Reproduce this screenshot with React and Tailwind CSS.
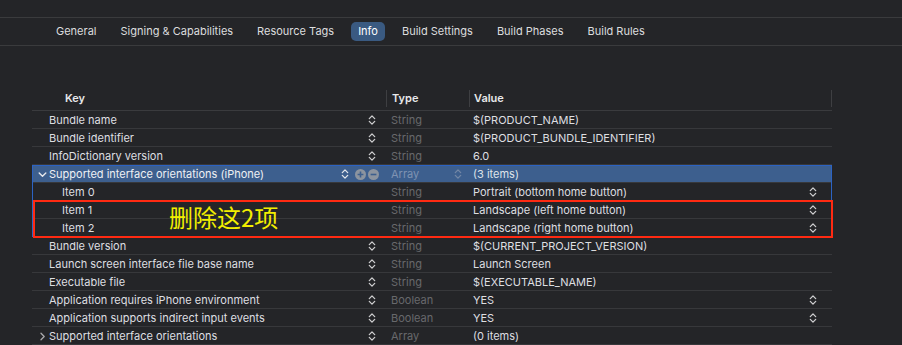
import React from "react";

const Stepper = ({ color = "#cfcfd1" }) => (
  <svg width="8" height="12" viewBox="0 0 8 12" className="shrink-0">
    <path d="M1.3 4.6 L4 1.9 L6.7 4.6" fill="none" stroke={color} strokeWidth="1.3" strokeLinecap="round" strokeLinejoin="round" />
    <path d="M1.3 7.4 L4 10.1 L6.7 7.4" fill="none" stroke={color} strokeWidth="1.3" strokeLinecap="round" strokeLinejoin="round" />
  </svg>
);

const Plus = () => (
  <svg width="11" height="11" viewBox="0 0 11 11" className="shrink-0">
    <circle cx="5.5" cy="5.5" r="5.5" fill="#8c949f" />
    <path d="M5.5 2.6 V8.4 M2.6 5.5 H8.4" stroke="#3d5f8e" strokeWidth="1.6" />
  </svg>
);

const Minus = () => (
  <svg width="11" height="11" viewBox="0 0 11 11" className="shrink-0">
    <circle cx="5.5" cy="5.5" r="5.5" fill="#8c949f" />
    <path d="M2.6 5.5 H8.4" stroke="#3d5f8e" strokeWidth="1.6" />
  </svg>
);

const ChevronDown = () => (
  <svg width="9" height="9" viewBox="0 0 9 9" className="shrink-0">
    <path d="M1.2 3 L4.5 6.2 L7.8 3" fill="none" stroke="#e6e8ec" strokeWidth="1.4" strokeLinecap="round" strokeLinejoin="round" />
  </svg>
);

const ChevronRight = () => (
  <svg width="9" height="9" viewBox="0 0 9 9" className="shrink-0">
    <path d="M3 1.2 L6.2 4.5 L3 7.8" fill="none" stroke="#a9a9ac" strokeWidth="1.3" strokeLinecap="round" strokeLinejoin="round" />
  </svg>
);

const tabs = ["General", "Signing & Capabilities", "Resource Tags", "Info", "Build Settings", "Build Phases", "Build Rules"];

function Row({ keyText, type, value, keyStepper = true, valueStepper = false, indent = false, disclosure = null }) {
  return (
    <div className="grid grid-cols-[354px_83px_363px] h-[18px] border-b border-[#37383b]">
      <div className="flex items-center pr-[10px] pt-[1px]">
        <div className="w-[17px] flex justify-end pr-[2px]">{disclosure === "right" ? <ChevronRight /> : null}</div>
        <span className={`text-[#dedfe1] ${indent ? "pl-[13px]" : ""}`}>{keyText}</span>
        <div className="ml-auto">{keyStepper ? <Stepper /> : null}</div>
      </div>
      <div className="flex items-center pl-[5px] pt-[1px] text-[#68696c]">{type}</div>
      <div className="flex items-center pl-[4px] pr-[15px] pt-[1px] text-[#dedfe1]">
        <span>{value}</span>
        <div className="ml-auto">{valueStepper ? <Stepper /> : null}</div>
      </div>
    </div>
  );
}

export default function App() {
  return (
    <div
      className="relative w-[902px] h-[345px] overflow-hidden bg-[#242528] text-[11px] leading-none"
      style={{ fontFamily: 'Inter, "Liberation Sans", Arial, sans-serif' }}
    >
      <div className="h-[18px] border-b border-[#3a3b3d]" />
      <div className="h-[28px] border-b border-[#3a3b3d] flex items-center pl-[44px] text-[#dcdddf]">
        {tabs.map((t) => (
          <div
            key={t}
            className={
              t === "Info"
                ? "mx-[5px] px-[7px] h-[19px] flex items-center rounded-[5px] bg-[#3a5a81] text-white"
                : "px-[7px] mx-[5px] h-[19px] flex items-center"
            }
          >
            {t}
          </div>
        ))}
      </div>

      <div className="ml-[32px] w-[800px] mt-[41px]">
        <div className="grid grid-cols-[354px_83px_363px] h-[24px] border-b border-[#3a3b3e] font-semibold text-[#e8e9eb]">
          <div className="flex items-center pl-[33px]">Key</div>
          <div className="flex items-center pl-[5px] border-l border-[#3e3f42] my-[3px]">Type</div>
          <div className="flex items-center pl-[4px] border-l border-r border-[#3e3f42] my-[3px]">Value</div>
        </div>

        <Row keyText="Bundle name" type="String" value="$(PRODUCT_NAME)" />
        <Row keyText="Bundle identifier" type="String" value="$(PRODUCT_BUNDLE_IDENTIFIER)" />
        <Row keyText="InfoDictionary version" type="String" value="6.0" />

        <div className="relative">
          <div className="grid grid-cols-[354px_83px_363px] h-[18px] bg-[#3d5f8e] border-b border-[#37383b]">
            <div className="flex items-center pr-[7px] pt-[1px]">
              <div className="w-[17px] flex justify-end pr-[2px]"><ChevronDown /></div>
              <span className="text-[#eef0f4]">Supported interface orientations (iPhone)</span>
              <div className="ml-auto flex items-center gap-[2px]">
                <Stepper color="#e4e7ec" />
                <div className="w-[2px]" />
                <Plus />
                <Minus />
              </div>
            </div>
            <div className="flex items-center pl-[5px] pr-[7px] pt-[1px] text-[#7f93b2]">
              <span>Array</span>
              <div className="ml-auto"><Stepper color="#7387a6" /></div>
            </div>
            <div className="flex items-center pl-[4px] pt-[1px] text-[#dfe3ea]">(3 items)</div>
          </div>
          <Row keyText="Item 0" type="String" value="Portrait (bottom home button)" keyStepper={false} valueStepper indent />
          <Row keyText="Item 1" type="String" value="Landscape (left home button)" keyStepper={false} valueStepper indent />
          <Row keyText="Item 2" type="String" value="Landscape (right home button)" keyStepper={false} valueStepper indent />
          <div className="pointer-events-none absolute inset-0 border-x border-t border-[#2c63c3]" />
        </div>

        <Row keyText="Bundle version" type="String" value="$(CURRENT_PROJECT_VERSION)" />
        <Row keyText="Launch screen interface file base name" type="String" value="Launch Screen" />
        <Row keyText="Executable file" type="String" value="$(EXECUTABLE_NAME)" />
        <Row keyText="Application requires iPhone environment" type="Boolean" value="YES" valueStepper />
        <Row keyText="Application supports indirect input events" type="Boolean" value="YES" valueStepper />
        <Row keyText="Supported interface orientations" type="Array" value="(0 items)" disclosure="right" />
      </div>

      <div className="pointer-events-none absolute left-[33px] top-[200px] w-[800px] h-[38px] border-2 border-[#ff2a12]" />
      <div
        className="pointer-events-none absolute left-[169px] top-[202px] text-[24px] leading-[30px] text-[#f2ee00]"
        style={{ fontFamily: '"Noto Sans CJK SC", "Liberation Sans", sans-serif' }}
      >
        删除这2项
      </div>
    </div>
  );
}
